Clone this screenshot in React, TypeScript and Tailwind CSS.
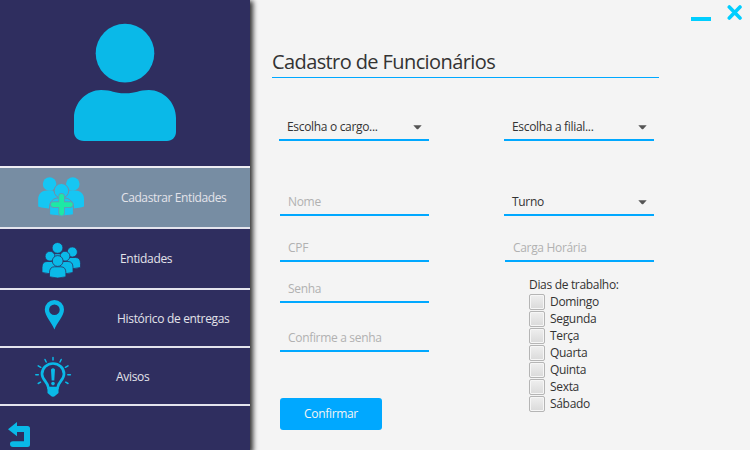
import React from "react";

const CYAN = "#0ab9e8";

function Avatar() {
  return (
    <svg width="104" height="120" viewBox="73 23 104 120" fill={CYAN}>
      <ellipse cx="125" cy="53.2" rx="29.3" ry="29.4" />
      <path d="M74 118C74 102 87 90 101 90C113 90 113 93.3 125 93.3C137 93.3 138 90 149 90C163 90 176 102 176 118V132C176 137 172 141 167 141H84C78 141 74 137 74 132Z" />
    </svg>
  );
}

function AddGroupIcon() {
  return (
    <svg width="50" height="42" viewBox="36 175 50 42" fill="#16c6f3">
      <circle cx="49.6" cy="184" r="6.8" />
      <circle cx="72.8" cy="184" r="6.8" />
      <path d="M38.2 206.5V199C38.2 194 42 190.6 47 190.6H53L58 197L53 208.5Q44 208.5 38.2 206.5Z" />
      <path d="M84 206.5V199C84 194 80 190.6 75 190.6H69L64 197L69 208.5Q78 208.5 84 206.5Z" />
      <path d="M49.6 214.8V207C49.6 201 54 198 58 198H64.5C69 198 73.4 201.5 73.4 207V214.8Q61 217.5 49.6 214.8Z" stroke="#778da3" strokeWidth="1" />
      <circle cx="61.4" cy="190.8" r="7.3" stroke="#778da3" strokeWidth="1" />
      <path d="M61.6 196.3V213.1M53.3 204.6H70.3" stroke="#5f9fb4" strokeWidth="6.6" strokeLinecap="round" />
      <path d="M61.6 196.3V213.1M53.3 204.6H70.3" stroke="#1de9a5" strokeWidth="4.8" strokeLinecap="round" />
    </svg>
  );
}

function Person({ x, y, r, w, h }: { x: number; y: number; r: number; w: number; h: number }) {
  const top = y + r + 0.4;
  const l = x - w / 2;
  const e = x + w / 2;
  return (
    <g fill={CYAN} stroke="#2f2e5f" strokeWidth="0.8">
      <path d={`M${l} ${top + h - 1}V${top + 6}Q${l} ${top} ${l + 5} ${top}H${e - 5}Q${e} ${top} ${e} ${top + 6}V${top + h - 1}Q${x} ${top + h + 1.5} ${l} ${top + h - 1}Z`} />
      <circle cx={x} cy={y} r={r} />
    </g>
  );
}

function GroupIcon() {
  return (
    <svg width="40" height="37" viewBox="41 242 40 37">
      <Person x={72.3} y={252} r={5.1} w={16.4} h={11} />
      <Person x={57.5} y={247.9} r={5.4} w={14} h={12} />
      <Person x={50} y={256.2} r={4.9} w={16} h={12} />
      <Person x={65} y={256.2} r={4.9} w={16} h={12} />
      <Person x={57.7} y={261} r={5.4} w={16.4} h={11} />
    </svg>
  );
}

function PinIcon() {
  return (
    <svg width="22" height="32" viewBox="44 299 22 32" fill={CYAN}>
      <path fillRule="evenodd" d="M54.4 329.5C52 323 44.8 316 44.8 309.5A9.6 9.6 0 0 1 64 309.5C64 316 56.8 323 54.4 329.5ZM54.4 304.5A5.3 5.3 0 1 0 54.4 315.1A5.3 5.3 0 1 0 54.4 304.5Z" />
    </svg>
  );
}

function BulbIcon() {
  return (
    <svg width="38" height="42" viewBox="34 356 38 42" fill="none" stroke={CYAN} strokeLinecap="round">
      <path strokeWidth="2.7" d="M48.5 388C48 382 42 380 42 374A11 10.5 0 0 1 64 374C64 380 58 382 57.5 388Z" />
      <path fill={CYAN} stroke="none" d="M47.5 387.4H58.5V393L55.5 395.5Q53 398 50.5 395.5L47.5 393Z" />
      <path strokeWidth="1.5" d="M53 357.5V360M45 359.5L46.2 362M61.2 359.5L60 362M38.2 365.8L40.8 367.3M68 365.8L65.4 367.3M35.8 374.7H38.3M67.8 374.7H70.4M38.2 383.5L40.5 382.2M68 383.5L65.7 382.2" />
      <path fill={CYAN} stroke="none" d="M51 369.5Q53 367 55 369.5L54.3 380.5H51.7Z" />
      <circle cx="53" cy="383.6" r="1.8" fill={CYAN} stroke="none" />
    </svg>
  );
}

function BackIcon() {
  return (
    <svg width="24" height="26" viewBox="7 421 24 26" fill={CYAN}>
      <path d="M8 429.2L17 422V426H27.5Q30 426 30 428.5V444.5Q30 447 27.5 447H13Q10 447 10 444Q10 441.2 13 441.2H24V432H17V436.3Z" />
    </svg>
  );
}

function MenuItem({ icon, label, row, iconPad, textClass }: { icon: React.ReactNode; label: string; row: string; iconPad: string; textClass: string }) {
  return (
    <div className={`flex shrink-0 items-start border-b-2 border-[#e4e4ed] ${row}`}>
      <div className={`w-[110px] shrink-0 ${iconPad}`}>{icon}</div>
      <span className={`whitespace-nowrap leading-4 text-[#e3e3ea] ${textClass}`}>{label}</span>
    </div>
  );
}

function Combo({ label, className }: { label: string; className: string }) {
  return (
    <div className={`flex h-7 w-[150px] shrink-0 items-start justify-between border-b-2 border-[#00a8ff] pl-2 pr-[7px] ${className}`}>
      <span className="mt-1.5 whitespace-nowrap leading-4 text-[#333]">{label}</span>
      <svg className="mt-[11.5px]" width="9" height="5" viewBox="0 0 9 5" fill="#555">
        <path d="M0.3 0.2H8.7L5.3 4Q4.5 4.6 3.7 4Z" />
      </svg>
    </div>
  );
}

function Field({ label, className }: { label: string; className: string }) {
  return (
    <div className={`ml-px h-7 w-[148.5px] shrink-0 border-b-2 border-[#00a8ff] pl-2 pt-1.5 ${className}`}>
      <div className="whitespace-nowrap leading-4 text-[#b1b1b1]">{label}</div>
    </div>
  );
}

const days = ["Domingo", "Segunda", "Terça", "Quarta", "Quinta", "Sexta", "Sábado"];

export default function App() {
  return (
    <div className="flex h-[450px] w-[750px] overflow-hidden bg-[#f4f4f4] font-['Open_Sans','Noto_Sans',sans-serif] text-[12px] tracking-[-0.32px]">
      <aside className="z-10 flex w-[250px] shrink-0 flex-col bg-[#2f2e5f] shadow-[2px_2px_5px_1px_#000000cc]">
        <div className="flex h-[168px] shrink-0 justify-center border-b-2 border-[#eeeef3] pt-[23px]">
          <Avatar />
        </div>
        <MenuItem icon={<AddGroupIcon />} label="Cadastrar Entidades" row="h-[61px] bg-[#778da3]" iconPad="pl-9 pt-[7px]" textClass="ml-[11px] mt-[22px] tracking-[-0.4px]" />
        <MenuItem icon={<GroupIcon />} label="Entidades" row="h-[61px]" iconPad="pl-[41px] pt-[13px]" textClass="ml-[10px] mt-[22px]" />
        <MenuItem icon={<PinIcon />} label="Histórico de entregas" row="h-[58px]" iconPad="pl-[44px] pt-[9px]" textClass="ml-[7px] mt-[21px]" />
        <MenuItem icon={<BulbIcon />} label="Avisos" row="h-[58px]" iconPad="pl-[34px] pt-2" textClass="ml-[6px] mt-[21px]" />
        <div className="pl-[7px] pt-[15px]">
          <BackIcon />
        </div>
      </aside>

      <main className="flex w-[500px] flex-col">
        <div className="flex h-10 shrink-0 justify-end pr-[7px]">
          <div className="mr-4 mt-[17px] h-1 w-5 bg-[#00ceff]" />
          <svg className="mt-1" width="16" height="17" viewBox="0 0 16 17" fill="none" stroke="#00ceff" strokeWidth="3.6" strokeLinecap="round">
            <path d="M2.3 3L13 14M13 3L2.3 14" />
          </svg>
        </div>
        <h1 className="ml-[22px] h-[38px] w-[387px] shrink-0 border-b border-[#00a8ff] pt-2 text-[20px] leading-7 tracking-[-0.6px] text-[#333]">
          Cadastro de Funcionários
        </h1>

        <div className="flex pl-[29px]">
          <section className="flex w-[225px] flex-col">
            <Combo label="Escolha o cargo..." className="mt-[35px]" />
            <Field label="Nome" className="mt-[47px]" />
            <Field label="CPF" className="mt-[18px]" />
            <Field label="Senha" className="mt-[13px]" />
            <Field label="Confirme a senha" className="mt-[21px]" />
            <button className="ml-px mt-[46px] h-8 w-[102px] rounded-[3px] bg-[#00a8ff] tracking-[-0.32px] text-[#f4f4f4]">
              Confirmar
            </button>
          </section>
          <section className="flex w-[200px] flex-col">
            <Combo label="Escolha a filial..." className="mt-[35px]" />
            <Combo label="Turno" className="mt-[47px]" />
            <Field label="Carga Horária" className="mt-[18px]" />
            <div className="ml-[25px] mt-[15px] flex flex-col text-[#333]">
              <div className="h-[17px] leading-4">Dias de trabalho:</div>
              {days.map((day) => (
                <label key={day} className="flex h-[17px] items-start gap-[5px]">
                  <span className="h-4 w-4 shrink-0 rounded-[2px] border border-[#b5b5b5] bg-linear-to-b from-[#efefef] to-[#dadada] shadow-[inset_0_0_0_1px_#f6f6f6]" />
                  <span className="leading-4">{day}</span>
                </label>
              ))}
            </div>
          </section>
        </div>
      </main>
    </div>
  );
}
